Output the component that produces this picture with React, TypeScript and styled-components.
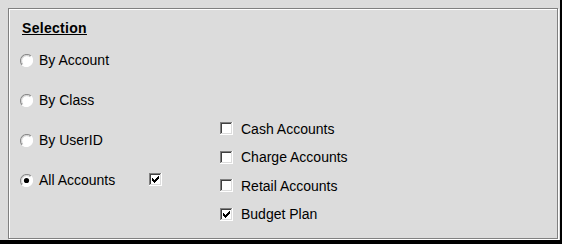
import React, { useState } from 'react';
import styled, { createGlobalStyle } from 'styled-components';

const GlobalStyle = createGlobalStyle`
  html, body {
    margin: 0;
    padding: 0;
    background: #dcdcdc;
  }
`;

const Frame = styled.div`
  width: 562px;
  height: 244px;
  box-sizing: border-box;
  background: #dcdcdc;
  border-right: 2px solid #000;
  border-bottom: 4px solid #000;
  padding: 8px 0 0 8px;
  font-family: 'Liberation Sans', Arial, sans-serif;
  font-size: 14px;
  color: #000;
`;

const GroupBox = styled.div`
  width: 550px;
  height: 231px;
  box-sizing: border-box;
  border: 1px solid #808080;
  box-shadow: 1px 1px 0 #fff, inset 1px 1px 0 #fff;
  padding-top: 11px;
`;

const Title = styled.div`
  margin-left: 13px;
  font-weight: bold;
  line-height: 16px;
  letter-spacing: 0.3px;
  text-decoration: underline;
  text-underline-offset: 1px;
`;

const Body = styled.div`
  display: flex;
  align-items: flex-start;
  margin-top: 14px;
  padding-left: 11px;
`;

const RadioList = styled.div`
  display: grid;
  grid-template-columns: 13px 104px 13px;
  grid-auto-rows: 20px;
  column-gap: 6px;
  row-gap: 20px;
  align-items: center;
`;

const CheckList = styled.div`
  display: grid;
  grid-template-columns: 13px auto;
  grid-auto-rows: 20px;
  column-gap: 8px;
  row-gap: 8.5px;
  align-items: center;
  margin-top: 68.5px;
  margin-left: 58px;
`;

const Label = styled.span`
  line-height: 20px;
  white-space: nowrap;
  cursor: default;
`;

const Control = styled.span<{ $shift?: number }>`
  display: block;
  width: 13px;
  height: 13px;
  cursor: default;
  margin-top: ${(p) => p.$shift ?? 0}px;
  svg {
    display: block;
  }
`;

const checkPixels = [5, 6, 7, 6, 5, 4, 3];

const CheckBox = ({ checked, onToggle, shift }: { checked: boolean; onToggle: () => void; shift?: number }) => (
  <Control $shift={shift} onClick={onToggle}>
    <svg width="13" height="13" viewBox="0 0 13 13" shapeRendering="crispEdges">
      <rect x="0" y="0" width="13" height="13" fill="#ffffff" />
      <rect x="0" y="0" width="12" height="1" fill="#808080" />
      <rect x="0" y="0" width="1" height="12" fill="#808080" />
      <rect x="1" y="1" width="10" height="1" fill="#404040" />
      <rect x="1" y="1" width="1" height="10" fill="#404040" />
      <rect x="1" y="11" width="11" height="1" fill="#dcdcdc" />
      <rect x="11" y="1" width="1" height="11" fill="#dcdcdc" />
      {checked &&
        checkPixels.map((y, i) => (
          <rect key={i} x={3 + i} y={y} width="1" height="3" fill="#000" />
        ))}
    </svg>
  </Control>
);

const Radio = ({ checked, onSelect }: { checked: boolean; onSelect: () => void }) => (
  <Control onClick={onSelect}>
    <svg width="13" height="13" viewBox="0 0 13 13">
      <circle cx="6.5" cy="6.5" r="6.2" fill="#ffffff" />
      <path d="M2.12 10.88 A6.2 6.2 0 0 1 10.88 2.12" fill="none" stroke="#8c8c8c" strokeWidth="1.2" />
      <path d="M10.88 2.12 A6.2 6.2 0 0 1 2.12 10.88" fill="none" stroke="#ffffff" strokeWidth="1.2" />
      <path d="M2.9 10.1 A5.1 5.1 0 0 1 10.1 2.9" fill="none" stroke="#c8c8c8" strokeWidth="1" />
      {checked && <circle cx="6.5" cy="6.5" r="2.6" fill="#000" />}
    </svg>
  </Control>
);

const modes = ['By Account', 'By Class', 'By UserID', 'All Accounts'];

const App: React.FC = () => {
  const [mode, setMode] = useState('All Accounts');
  const [allFlag, setAllFlag] = useState(true);
  const [types, setTypes] = useState<Record<string, boolean>>({
    'Cash Accounts': false,
    'Charge Accounts': false,
    'Retail Accounts': false,
    'Budget Plan': true,
  });

  return (
    <Frame>
      <GlobalStyle />
      <GroupBox>
        <Title>Selection</Title>
        <Body>
          <RadioList>
            {modes.map((m) => (
              <React.Fragment key={m}>
                <Radio checked={mode === m} onSelect={() => setMode(m)} />
                <Label onClick={() => setMode(m)}>{m}</Label>
                {m === 'All Accounts' ? (
                  <CheckBox checked={allFlag} onToggle={() => setAllFlag(!allFlag)} shift={-2} />
                ) : (
                  <span />
                )}
              </React.Fragment>
            ))}
          </RadioList>
          <CheckList>
            {Object.keys(types).map((t) => (
              <React.Fragment key={t}>
                <CheckBox checked={types[t]} onToggle={() => setTypes({ ...types, [t]: !types[t] })} />
                <Label onClick={() => setTypes({ ...types, [t]: !types[t] })}>{t}</Label>
              </React.Fragment>
            ))}
          </CheckList>
        </Body>
      </GroupBox>
    </Frame>
  );
};

export default App;
